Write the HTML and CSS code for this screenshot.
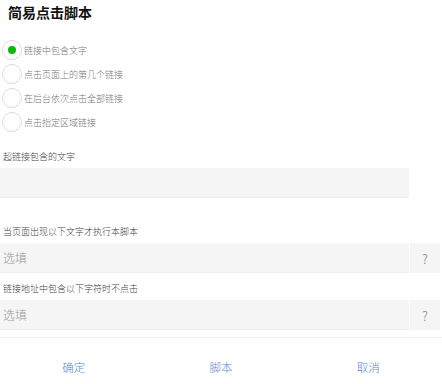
FILE: index.html
```html
<!DOCTYPE html>
<html>

<head>
    <title>简易点击脚本</title>
    <meta name="viewport" content="width=device-width, initial-scale=1.0">
    <link rel="stylesheet" href="styles.css">
</head>

<body>
    <h1 class="title">简易点击脚本</h1>
    <div class="modes">
        <label class="mode">
            <span class="radio checked"></span>
            <span class="modetext">链接中包含文字</span>
        </label>
        <label class="mode">
            <span class="radio"></span>
            <span class="modetext">点击页面上的第几个链接</span>
        </label>
        <label class="mode">
            <span class="radio"></span>
            <span class="modetext">在后台依次点击全部链接</span>
        </label>
        <label class="mode">
            <span class="radio"></span>
            <span class="modetext">点击指定区域链接</span>
        </label>
    </div>

    <div class="field first">
        <div class="fieldlabel">超链接包含的文字</div>
        <div class="inputrow">
            <input type="text" class="textbox">
        </div>
    </div>

    <div class="field second">
        <div class="fieldlabel">当页面出现以下文字才执行本脚本</div>
        <div class="inputrow">
            <input type="text" class="textbox" placeholder="选填">
            <button class="helpbutton">?</button>
        </div>
    </div>

    <div class="field third">
        <div class="fieldlabel">链接地址中包含以下字符时不点击</div>
        <div class="inputrow">
            <input type="text" class="textbox" placeholder="选填">
            <button class="helpbutton">?</button>
        </div>
    </div>

    <div class="divider"></div>

    <div class="actions">
        <button class="actionbutton">确定</button>
        <button class="actionbutton">脚本</button>
        <button class="actionbutton">取消</button>
    </div>
</body>

</html>
```

FILE: styles.css
```css
* {
    font-family: "Noto Sans CJK SC", "Noto Sans", sans-serif;
    box-sizing: border-box;
}

body {
    margin: 0;
    width: 442px;
    background-color: white;
}

.title {
    margin: 0;
    padding-left: 8px;
    height: 24px;
    line-height: 24px;
    font-size: 14px;
    font-weight: bold;
    color: #111;
}

.modes {
    margin-top: 14px;
    display: flex;
    flex-direction: column;
}

.mode {
    height: 24px;
    display: flex;
    align-items: center;
    gap: 2px;
    padding-left: 2px;
}

.radio {
    width: 20px;
    height: 20px;
    border: 1px solid #dcdcdc;
    border-radius: 50%;
    display: flex;
    align-items: center;
    justify-content: center;
}

.radio.checked::after {
    content: "";
    width: 8px;
    height: 8px;
    border-radius: 50%;
    background-color: #09bb07;
}

.modetext {
    font-size: 9px;
    font-weight: 300;
    color: #777;
}

.fieldlabel {
    height: 16px;
    line-height: 16px;
    padding-left: 3px;
    font-size: 9px;
    font-weight: 300;
    color: #444;
    margin-bottom: 3px;
}

.field.first {
    margin-top: 15px;
}

.field.second {
    margin-top: 26px;
}

.field.third {
    margin-top: 8px;
}

.inputrow {
    display: flex;
    gap: 1px;
}

.textbox {
    width: 409px;
    height: 30px;
    border: none;
    border-bottom: 1px solid #eeeeee;
    background-color: #f5f5f5;
    padding: 0 3px;
    font-size: 12px;
    font-weight: 300;
    color: #333;
    outline: none;
}

.textbox::placeholder {
    color: #999;
}

.helpbutton {
    width: 30px;
    height: 30px;
    border: none;
    background-color: #f5f5f5;
    color: #888;
    font-size: 13px;
    font-weight: 300;
    padding: 0;
}

.divider {
    margin-top: 7px;
    height: 1px;
    background-color: #f2f2f2;
}

.actions {
    display: grid;
    grid-template-columns: 1fr 1fr 1fr;
    margin-top: 20px;
}

.actionbutton {
    height: 18px;
    border: none;
    background: none;
    padding: 0;
    font-size: 11.5px;
    font-weight: 300;
    color: #6482dc;
}
```
